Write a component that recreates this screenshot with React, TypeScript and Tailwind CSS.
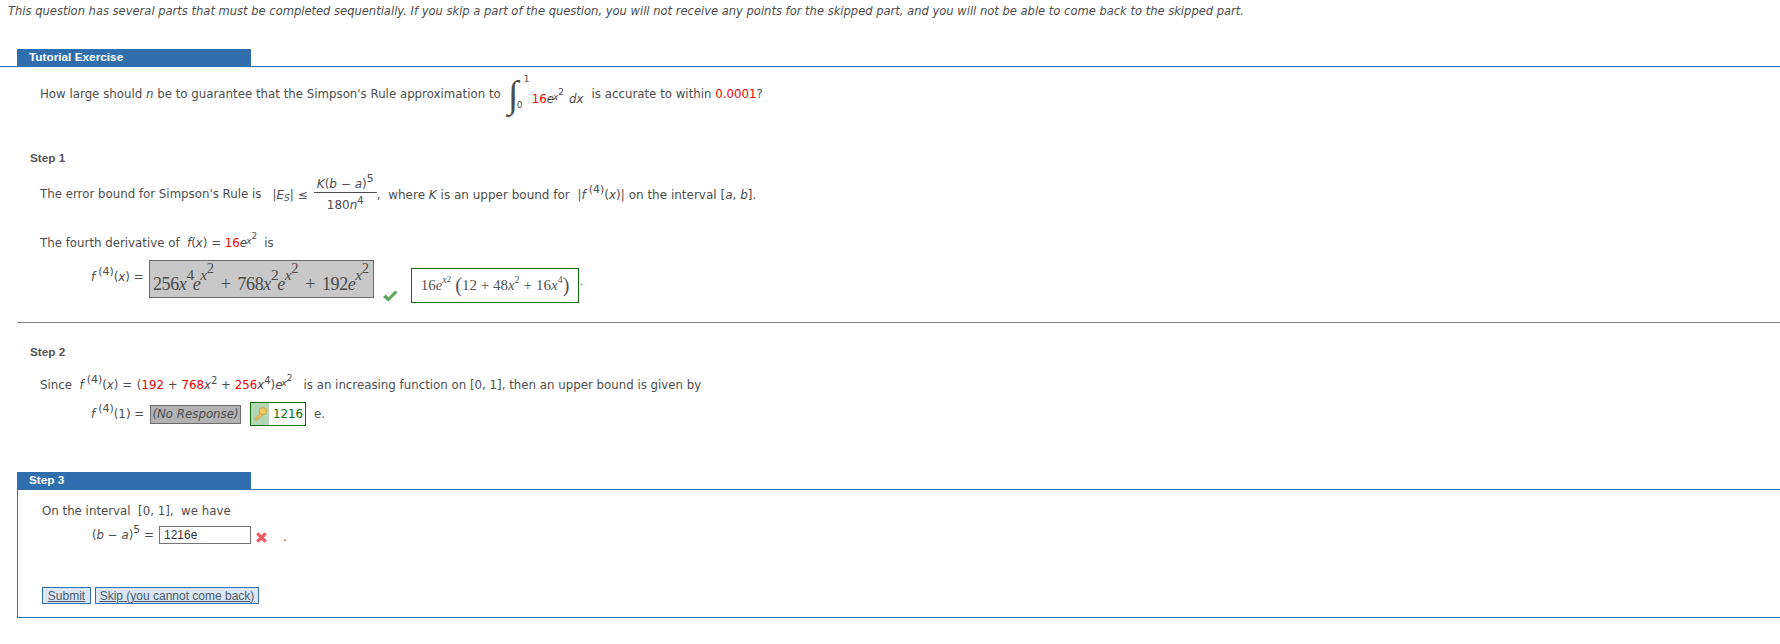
import React from 'react';

const verdana = 'font-["DejaVu_Sans",Verdana,sans-serif]';

function R({ children }: { children: React.ReactNode }) {
  return <span className="text-[#f00000]">{children}</span>;
}

function I({ children }: { children: React.ReactNode }) {
  return <i className="italic">{children}</i>;
}

function F4({ arg }: { arg: string }) {
  return (
    <span>
      <I>f</I>
      <sup className="ml-[3px] text-[11px] leading-none">(4)</sup>({arg === 'x' ? <I>x</I> : arg})
    </span>
  );
}

function ExpX2() {
  return (
    <span>
      <I>e</I>
      <sup className="relative -top-[3px] -ml-[1px] text-[9px] leading-none">
        <I>x</I>
        <sup className="text-[9px] leading-none">2</sup>
      </sup>
    </span>
  );
}

function StepBar({ label }: { label: string }) {
  return (
    <div className="h-[17px] w-[234px] bg-[#2f6fad] pl-[12px] font-['Liberation_Sans',Arial,sans-serif] text-[11.8px] leading-[16px] font-bold text-white">
      {label}
    </div>
  );
}

function StepLabel({ label }: { label: string }) {
  return <div className="pl-[30px] font-['Liberation_Sans',Arial,sans-serif] text-[11.8px] font-bold text-[#555555]">{label}</div>;
}

function BigTerm({ coef, pow }: { coef: React.ReactNode; pow?: string }) {
  return (
    <span className="flex items-baseline">
      <span>{coef}</span>
      {pow && <span className="relative -top-[10px] text-[15.5px] leading-none">{pow}</span>}
      <i className={pow ? '-ml-[1px]' : ''}>e</i>
      <i className="relative -top-[10px] text-[15.5px] leading-none">x</i>
      <span className="relative -top-[17px] text-[14.5px] leading-none">2</span>
    </span>
  );
}

export default function App() {
  return (
    <div className={`h-[644px] w-[1780px] overflow-hidden bg-white ${verdana} text-[11.8px] text-[#4d4d4d]`}>
      <p className="pt-[4px] pl-[8px] text-[11.53px] leading-[14px] whitespace-nowrap italic">
        This question has several parts that must be completed sequentially. If you skip a part of the question, you will not receive any points for the skipped part, and you will not be able to come back to the skipped part.
      </p>

      {/* Tutorial Exercise */}
      <div className="mt-[31px] pl-[17px]">
        <StepBar label="Tutorial Exercise" />
      </div>
      <div className="h-px bg-[#2f6fad]" />

      <div className="mt-[2px] ml-[40px] flex h-[52px] items-center">
        <span>
          How large should <I>n</I> be to guarantee that the Simpson's Rule approximation to
        </span>
        <span className="relative ml-[7px] h-[44px] w-[23px] font-['Liberation_Serif',serif]">
          <span className="absolute top-[2px] left-0 text-[38px] leading-[38px] font-light">∫</span>
          <span className={`absolute top-[0px] left-[16px] ${verdana} text-[9px] leading-[12px]`}>1</span>
          <span className={`absolute top-[26px] left-[9px] ${verdana} text-[9px] leading-[12px]`}>0</span>
        </span>
        <span className="mt-[9px] ml-[1px]">
          <R>16</R>
          <ExpX2 />
        </span>
        <span className="mt-[9px] ml-[5px] italic">dx</span>
        <span className="ml-[8px]">
          is accurate to within <R>0.0001</R>?
        </span>
      </div>

      <div className="mt-[29px]">
        <StepLabel label="Step 1" />
      </div>

      <div className="mt-[9px] ml-[40px] flex h-[36px] items-center whitespace-pre">
        <span>The error bound for Simpson's Rule is</span>
        <span className="ml-[11px] text-[12px]">
          |<I>E</I>
          <sub className="italic">S</sub>| ≤
        </span>
        <span className="ml-[6px] inline-flex w-[63px] flex-col items-center text-[12px]">
          <span className="w-full border-b border-[#4d4d4d] text-center leading-[15px]">
            <I>K</I>(<I>b</I> − <I>a</I>)<sup className="text-[11px] leading-none">5</sup>
          </span>
          <span className="pt-[4px] leading-[16px]">
            180<I>n</I>
            <sup className="text-[10px] leading-none">4</sup>
          </span>
        </span>
        <span className="text-[12px]">
          ,  where <I>K</I> is an upper bound for  |<F4 arg="x" />| on the interval [<I>a</I>, <I>b</I>].
        </span>
      </div>

      <div className="mt-[21px] ml-[40px] flex h-[20px] items-center whitespace-pre">
        <span>
          The fourth derivative of  <I>f</I>(<I>x</I>) = <R>16</R>
          <ExpX2 />
          <span className="ml-[7px]">is</span>
        </span>
      </div>

      {/* Step 1 answer */}
      <div className="mt-[6px] ml-[91px] flex h-[42px] items-start">
        <span className="mt-[9px] w-[58px]">
          <F4 arg="x" /> =
        </span>
        <span className="flex h-[38px] w-[225px] items-end border border-[#6b6b6b] bg-[#c8c8c8] pb-[2px] pl-[3px] font-['Liberation_Serif',serif] text-[18px] leading-[22px] tracking-[-0.4px] whitespace-nowrap text-[#4a4a4a]">
          <BigTerm coef={<>256<i>x</i></>} pow="4" />
          <span className="mx-[7px]">+</span>
          <BigTerm coef={<>768<i>x</i></>} pow="2" />
          <span className="mx-[7px]">+</span>
          <BigTerm coef="192" />
        </span>
        <svg viewBox="0 0 16 12" className="mt-[30px] ml-[8px] h-[12px] w-[16px]">
          <path d="M1 7 L4 4.5 L6.5 7.5 L13 0.5 L15.5 2.5 L6.5 11.5 Z" fill="#5ba55b" />
        </svg>
        <span className="mt-[8px] ml-[13px] flex h-[35px] w-[168px] items-center justify-center border border-[#0a6e0a] font-['Liberation_Serif',serif] text-[15px] whitespace-nowrap text-[#555555]">
          16
          <I>e</I>
          <span className="relative -top-[5px] text-[10px] leading-none">
            <I>x</I>
            <span className="relative -top-[1px] text-[9px]">2</span>
          </span>
          <span className="ml-[4px] text-[20px] leading-none font-light">(</span>
          12 + 48<I>x</I>
          <span className="relative -top-[5px] text-[10px] leading-none">2</span>
          <span className="mx-[4px]">+</span>16<I>x</I>
          <span className="relative -top-[5px] text-[10px] leading-none">4</span>
          <span className="text-[20px] leading-none font-light">)</span>
        </span>
        <span className="mt-[14px] ml-[1px] text-[10px]">.</span>
      </div>

      <div className="mt-[20px] ml-[17px] h-px bg-[#808080]" />

      <div className="mt-[21px]">
        <StepLabel label="Step 2" />
      </div>

      <div className="mt-[13px] ml-[40px] flex h-[22px] items-center whitespace-pre">
        <span>
          Since  <F4 arg="x" /> = <span className="ml-[1px]">(</span>
          <R>192</R> + <R>768</R>
          <I>x</I>
          <sup className="text-[10px] leading-none">2</sup> + <R>256</R>
          <I>x</I>
          <sup className="text-[10px] leading-none">4</sup>)
          <ExpX2 />
          <span className="ml-[11px]">is an increasing function on [0, 1], then an upper bound is given by</span>
        </span>
      </div>

      <div className="mt-[6px] ml-[91px] flex h-[24px] items-center">
        <span className="w-[59px]">
          <F4 arg="1" /> =
        </span>
        <span className="flex h-[19px] w-[91px] items-center justify-center border border-[#6b6b6b] bg-[#b3b3b3] italic">(No Response)</span>
        <span className="ml-[9px] flex h-[24px] w-[56px] items-stretch border border-[#0a6e0a]">
          <span className="flex w-[18px] items-center justify-center bg-[#b4d6b4]">
            <svg viewBox="0 0 16 16" className="h-[16px] w-[15px]">
              <circle cx="10.5" cy="5" r="4" fill="#f0c860" stroke="#c99a38" strokeWidth="0.8" />
              <path d="M8 7 L2 13 L3 15 L5 14 L5 12.5 L6.5 12.5 L10 9 Z" fill="#eebc55" stroke="#c99a38" strokeWidth="0.6" />
            </svg>
          </span>
          <span className="flex-1 pl-[4px] leading-[22px] text-[#0a6e0a]">1216</span>
        </span>
        <span className="ml-[8px]">e.</span>
      </div>

      {/* Step 3 */}
      <div className="mt-[46px] pl-[17px]">
        <StepBar label="Step 3" />
      </div>
      <div className="ml-[17px] h-[129px] border-t border-b border-l border-[#2f6fad] pl-[24px]">
        <div className="mt-[13px] leading-[16px] whitespace-pre">On the interval  [0, 1],  we have</div>
        <div className="mt-[6px] ml-[50px] flex h-[20px] items-center">
          <span className="w-[67px]">
            (<I>b</I> − <I>a</I>)<sup className="text-[11px] leading-none">5</sup> =
          </span>
          <input
            readOnly
            value="1216e"
            className="h-[18px] w-[92px] border border-[#767676] pl-[4px] font-['Liberation_Sans',Arial,sans-serif] text-[12px] text-[#333333]"
          />
          <svg viewBox="0 0 14 14" className="mt-[4px] ml-[4px] h-[13px] w-[13px]">
            <path d="M2.5 2.5 L11.5 11.5 M11.5 2.5 L2.5 11.5" stroke="#ef5a63" strokeWidth="3.6" />
          </svg>
          <span className="mt-[4px] ml-[15px]">.</span>
        </div>
        <div className="mt-[42px] flex gap-[4px] font-['Liberation_Sans',Arial,sans-serif] text-[12px] text-[#4a5a70] underline">
          <button className="h-[17px] w-[49px] border border-[#2f6fad] bg-[#dbe6f2] leading-[14px] underline">Submit</button>
          <button className="h-[17px] w-[164px] border border-[#2f6fad] bg-[#dbe6f2] leading-[14px] underline">Skip (you cannot come back)</button>
        </div>
      </div>
    </div>
  );
}
